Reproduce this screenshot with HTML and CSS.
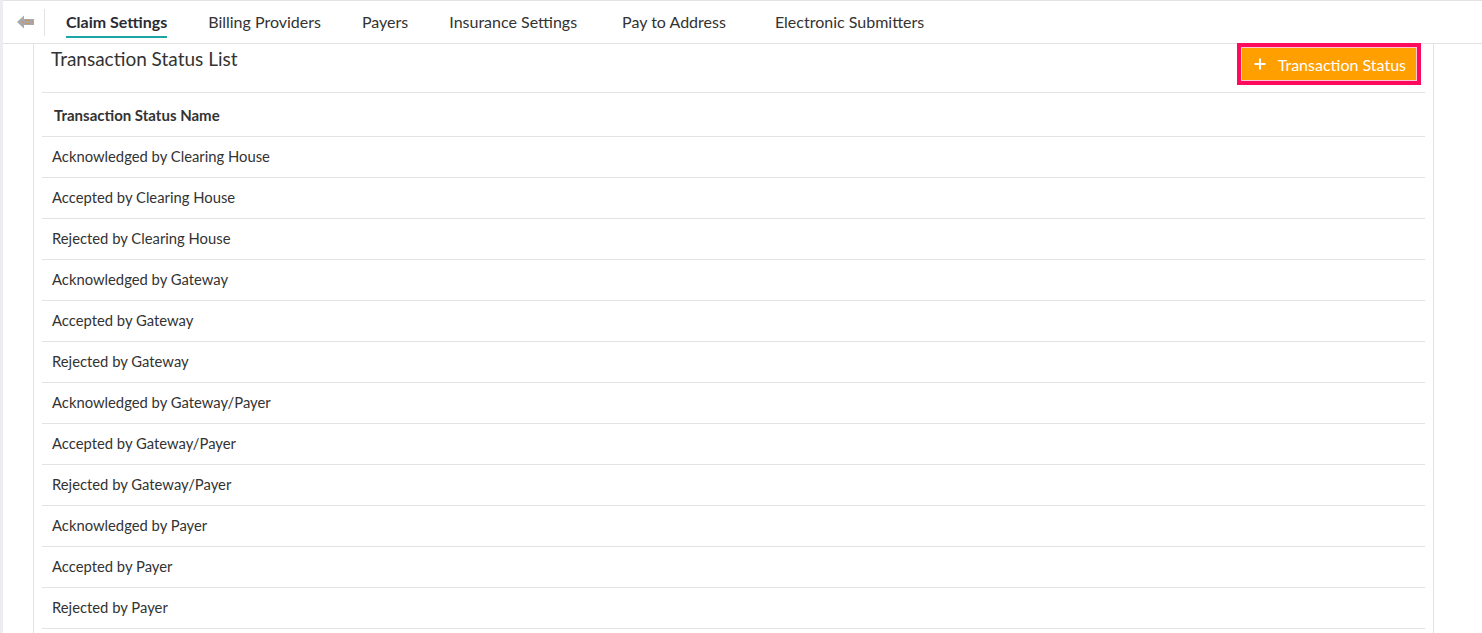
FILE: index.html
```html
<!DOCTYPE html>
<html lang="en">
<head>
    <meta charset="UTF-8">
    <title>Claim Settings - Transaction Status</title>
    <link rel="stylesheet" href="styles.css">
</head>
<body>

<div class="app">
    <nav class="tabs">
        <a class="back" href="#">
            <svg width="18" height="14" viewBox="0 0 18 14">
                <path d="M0 7 L7 0.5 L7 4 L17 4 L17 10 L7 10 L7 13.5 Z" fill="#a9a9ad"/>
                <circle cx="6" cy="7" r="0.8" fill="#e08a3c"/>
                <circle cx="9" cy="5.5" r="0.8" fill="#e08a3c"/>
                <circle cx="12" cy="5.5" r="0.8" fill="#e08a3c"/>
                <circle cx="9" cy="8.5" r="0.8" fill="#e08a3c"/>
                <circle cx="12" cy="8.5" r="0.8" fill="#e08a3c"/>
                <circle cx="15" cy="7" r="0.8" fill="#e08a3c"/>
            </svg>
        </a>
        <span class="divider"></span>
        <a class="tab active" href="#">Claim Settings</a>
        <a class="tab" href="#">Billing Providers</a>
        <a class="tab" href="#">Payers</a>
        <a class="tab" href="#">Insurance Settings</a>
        <a class="tab tab-wide" href="#">Pay to Address</a>
        <a class="tab" href="#">Electronic Submitters</a>
    </nav>

    <div class="content">
        <div class="panel">
            <div class="panel-head">
                <h3 class="panel-title">Transaction Status List</h3>
                <div class="btn-focus">
                    <button class="btn-add">
                        <svg width="12" height="12" viewBox="0 0 12 12">
                            <path d="M6 0.5 V11.5 M0.5 6 H11.5" stroke="#fff" stroke-width="2"/>
                        </svg>
                        Transaction Status
                    </button>
                </div>
            </div>

            <table class="status-table">
                <thead>
                    <tr><th>Transaction Status Name</th></tr>
                </thead>
                <tbody>
                    <tr><td>Acknowledged by Clearing House</td></tr>
                    <tr><td>Accepted by Clearing House</td></tr>
                    <tr><td>Rejected by Clearing House</td></tr>
                    <tr><td>Acknowledged by Gateway</td></tr>
                    <tr><td>Accepted by Gateway</td></tr>
                    <tr><td>Rejected by Gateway</td></tr>
                    <tr><td>Acknowledged by Gateway/Payer</td></tr>
                    <tr><td>Accepted by Gateway/Payer</td></tr>
                    <tr><td>Rejected by Gateway/Payer</td></tr>
                    <tr><td>Acknowledged by Payer</td></tr>
                    <tr><td>Accepted by Payer</td></tr>
                    <tr><td>Rejected by Payer</td></tr>
                </tbody>
            </table>
        </div>
    </div>
</div>

</body>
</html>
```

FILE: styles.css
```css
/* Reset */
* {
    margin: 0;
    padding: 0;
    box-sizing: border-box;
}

body {
    font-family: Lato, "Open Sans", Arial, sans-serif;
    color: #333;
    background: #fff;
    overflow: hidden;
}

.app {
    border-left: 3px solid #ececf1;
    min-height: 100vh;
}

/* Tab bar */
.tabs {
    display: flex;
    align-items: center;
    height: 44px;
    border-top: 1px solid #e3e3e3;
    border-bottom: 1px solid #e3e3e3;
}

.back {
    display: flex;
    align-items: center;
    padding-left: 14px;
    width: 41px;
    height: 100%;
}

.divider {
    width: 1px;
    height: 27px;
    background: #e3e3e3;
    margin-right: 21px;
}

.tab {
    position: relative;
    font-size: 16px;
    color: #333;
    text-decoration: none;
    margin-right: 41px;
    line-height: 20px;
}

.tab-wide {
    margin-left: 4px;
    margin-right: 49px;
}

.tab.active {
    font-weight: 700;
    color: #2b2b33;
}

.tab.active::after {
    content: "";
    position: absolute;
    left: 0;
    right: 0;
    bottom: -6px;
    height: 2px;
    background: #1ba5a5;
}

/* Main area */
.content {
    padding-left: 30px;
}

.panel {
    width: 1401px;
    min-height: 590px;
    border-left: 1px solid #e3e3e3;
    border-right: 1px solid #e3e3e3;
    padding: 0 8px;
}

.panel-head {
    display: flex;
    justify-content: space-between;
    align-items: flex-start;
    height: 49px;
    border-bottom: 1px solid #e3e3e3;
}

.panel-title {
    font-size: 19px;
    font-weight: 400;
    color: #333;
    padding: 3px 0 0 9px;
}

.btn-focus {
    border: 4px solid #ff0a5c;
    padding: 1px;
    background: #ffc6d8;
    margin-right: 4px;
    margin-top: -1px;
}

.btn-add {
    display: flex;
    align-items: center;
    gap: 12px;
    height: 32px;
    padding: 0 10px 0 12px;
    background: #ffa000;
    color: #fff;
    border: none;
    font-family: Lato, "Open Sans", Arial, sans-serif;
    font-size: 16px;
    cursor: pointer;
}

/* Table */
.status-table {
    width: 100%;
    border-collapse: collapse;
}

.status-table th {
    text-align: left;
    font-size: 15px;
    font-weight: 700;
    color: #333;
    height: 43px;
    padding: 1px 12px 0;
    border-bottom: 1px solid #e3e3e3;
}

.status-table td {
    font-size: 14.8px;
    height: 41px;
    padding: 0 10px 2px;
    border-bottom: 1px solid #e3e3e3;
}
```
